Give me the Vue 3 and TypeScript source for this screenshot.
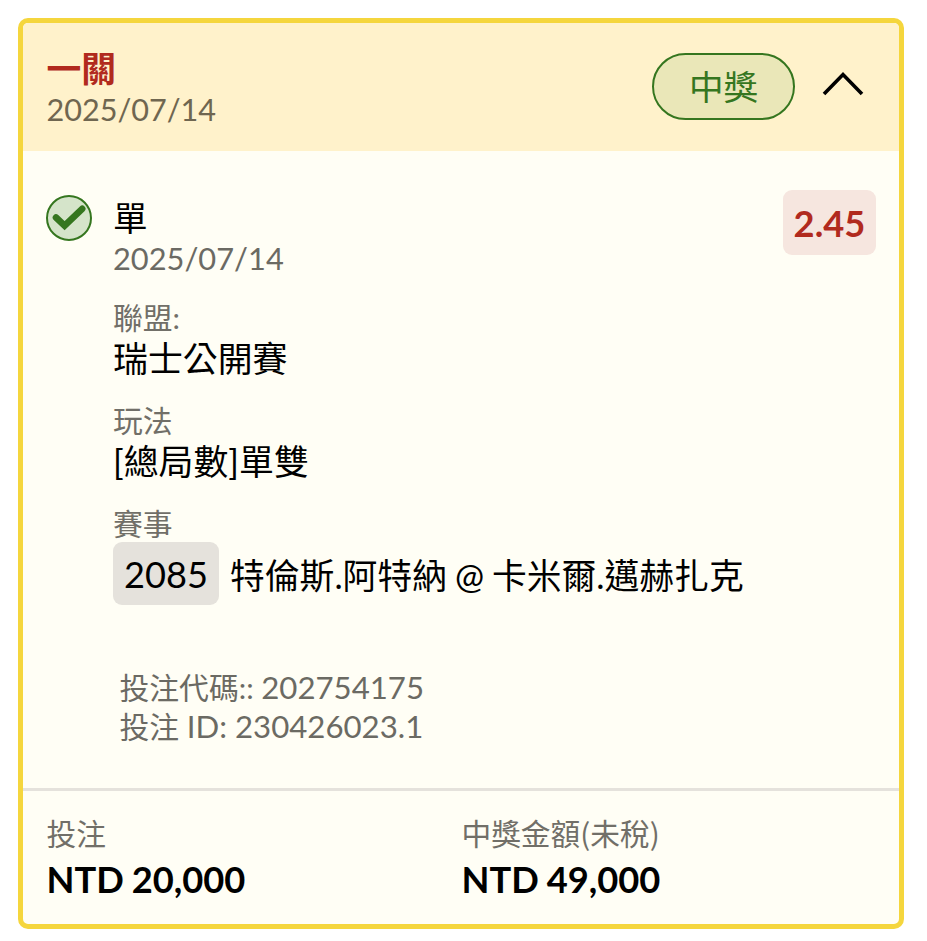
<template>
  <article class="bet-card">
    <header class="bet-card__header">
      <div>
        <h2 class="bet-card__title">一關</h2>
        <p class="bet-card__date">{{ bet.date }}</p>
      </div>
      <div class="bet-card__actions">
        <span class="status-pill">中獎</span>
        <button
          class="toggle"
          type="button"
          :aria-expanded="expanded"
          aria-label="展開"
          @click="expanded = !expanded"
        >
          <svg
            class="toggle__icon"
            :class="{ 'toggle__icon--closed': !expanded }"
            viewBox="0 0 44 28"
          >
            <path d="M3 25 L22 5.5 L41 25" />
          </svg>
        </button>
      </div>
    </header>

    <section v-show="expanded" class="selection">
      <svg class="selection__check" viewBox="0 0 48 48">
        <circle cx="24" cy="24" r="22" />
        <path d="M11 23.5 L19.6 31.6 L37.2 14.8" />
      </svg>
      <div class="selection__content">
        <p class="selection__name">{{ bet.pick }}</p>
        <p class="selection__date">{{ bet.date }}</p>
        <dl class="details">
          <div v-for="item in details" :key="item.label" class="details__item">
            <dt>{{ item.label }}</dt>
            <dd>{{ item.value }}</dd>
          </div>
          <div class="details__item">
            <dt>賽事</dt>
            <dd class="match">
              <span class="match__code">{{ bet.matchCode }}</span>
              <span class="match__teams">{{ bet.match }}</span>
            </dd>
          </div>
        </dl>
        <div class="reference">
          <p>投注代碼:: <span>{{ bet.code }}</span></p>
          <p>投注 <span>ID: {{ bet.id }}</span></p>
        </div>
      </div>
      <span class="odds">{{ bet.odds }}</span>
    </section>

    <footer class="bet-card__footer">
      <div v-for="total in totals" :key="total.label" class="total">
        <p class="total__label">{{ total.label }}</p>
        <p class="total__value">{{ total.value }}</p>
      </div>
    </footer>
  </article>
</template>

<script setup lang="ts">
import { ref } from 'vue'

interface LabelValue {
  label: string
  value: string
}

const expanded = ref(true)

const bet = {
  date: '2025/07/14',
  pick: '單',
  odds: '2.45',
  matchCode: '2085',
  match: '特倫斯.阿特納 @ 卡米爾.邁赫扎克',
  code: '202754175',
  id: '230426023.1',
}

const details: LabelValue[] = [
  { label: '聯盟:', value: '瑞士公開賽' },
  { label: '玩法', value: '[總局數]單雙' },
]

const totals: LabelValue[] = [
  { label: '投注', value: 'NTD 20,000' },
  { label: '中獎金額(未稅)', value: 'NTD 49,000' },
]
</script>

<style>
body {
  background: #fff;
}
</style>

<style scoped>
.bet-card {
  box-sizing: border-box;
  width: 886px;
  height: 911px;
  margin: 18px;
  display: flex;
  flex-direction: column;
  overflow: hidden;
  border: 5px solid #f5d63d;
  border-radius: 10px;
  background: #fffef5;
  color: #000;
  font-family: Lato, 'Noto Sans CJK TC', sans-serif;
  font-size: 34.6px;
  line-height: 41px;
}

h2,
p,
dl,
dt,
dd {
  margin: 0;
}

.bet-card__header {
  box-sizing: border-box;
  flex: none;
  height: 128px;
  display: flex;
  justify-content: space-between;
  padding: 25px 34px 0 23.5px;
  background: #fff2cb;
}

.bet-card__title {
  font-size: 34.8px;
  font-weight: 700;
  color: #b12a1e;
}

.bet-card__date,
.selection__date {
  font-size: 30.6px;
  color: #6b6a63;
}

.bet-card__date {
  color: #6f6650;
}

.bet-card__actions {
  display: flex;
  align-items: flex-start;
  gap: 26px;
  padding-top: 5px;
}

.status-pill {
  box-sizing: border-box;
  width: 143px;
  height: 67px;
  border: 2px solid #35761f;
  border-radius: 34px;
  background: #eae7b8;
  color: #35761f;
  line-height: 63px;
  text-align: center;
}

.toggle {
  margin-top: 16px;
  padding: 0;
  border: 0;
  background: none;
}

.toggle__icon {
  display: block;
  width: 44px;
  height: 28px;
  fill: none;
  stroke: #000;
  stroke-width: 3.6;
}

.toggle__icon--closed {
  transform: rotate(180deg);
}

.selection {
  flex: 1;
  display: flex;
  align-items: flex-start;
  padding: 39px 23px 0 22px;
}

.selection__check {
  flex: none;
  width: 48px;
  height: 48px;
  margin: 4px 20px 0 0;
}

.selection__check circle {
  fill: #d5e4ca;
  stroke: #35761f;
  stroke-width: 2;
}

.selection__check path {
  fill: none;
  stroke: #35761f;
  stroke-width: 6.6;
  stroke-linecap: round;
}

.selection__content {
  flex: 1;
  padding-top: 7px;
}

.selection__date {
  font-size: 30.8px;
}

.details__item {
  padding-top: 21px;
}

.details__item:first-child {
  padding-top: 18px;
}

.details dt {
  color: #716f68;
  font-size: 29.8px;
}

.details dd {
  font-size: 34.9px;
}

.details .match {
  display: flex;
  align-items: center;
  gap: 11px;
  margin-top: -2px;
  font-size: 34.8px;
  word-spacing: -1px;
  white-space: nowrap;
}

.match__code {
  width: 106px;
  height: 63px;
  border-radius: 9px;
  background: #e5e2dc;
  font-size: 36.2px;
  line-height: 65px;
  text-align: center;
}

.match__teams {
  padding-top: 4px;
}

.reference {
  padding: 63px 0 0 6.5px;
  color: #6b6a63;
  font-size: 29.8px;
  line-height: 38px;
}

.reference span {
  font-size: 31.2px;
}

.odds {
  flex: none;
  width: 93px;
  height: 65px;
  border-radius: 9px;
  background: #f6e6df;
  color: #b12a1e;
  font-size: 36.3px;
  font-weight: 700;
  line-height: 67px;
  text-align: center;
}

.bet-card__footer {
  box-sizing: border-box;
  flex: none;
  height: 136px;
  display: grid;
  grid-template-columns: 415px 1fr;
  padding: 20px 23.5px 0;
  border-top: 3px solid #e5e2dc;
}

.total__label {
  color: #716f68;
  font-family: 'Noto Sans CJK TC', sans-serif;
  font-size: 29.7px;
  line-height: 44px;
}

.total__value {
  font-size: 36.3px;
  font-weight: 700;
  line-height: 49px;
  word-spacing: -1px;
}
</style>
